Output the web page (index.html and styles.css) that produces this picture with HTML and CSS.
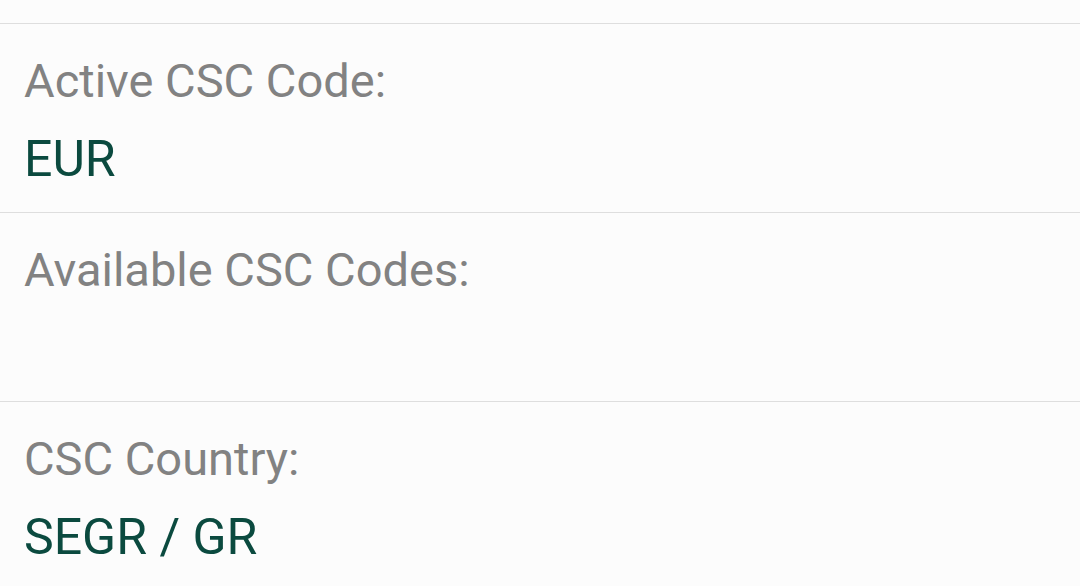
FILE: index.html
```html
<!DOCTYPE html>
<html>
  <head>
    <meta charset="utf-8">
    <title>CSC info</title>
    <link rel="stylesheet" href="styles.css">
  </head>
  <body>
    <div class="list">
      <div class="item item-prev"></div>
      <div class="item">
        <div class="label">Active CSC Code:</div>
        <div class="value">EUR</div>
      </div>
      <div class="item">
        <div class="label">Available CSC Codes:</div>
        <div class="value"></div>
      </div>
      <div class="item">
        <div class="label">CSC Country:</div>
        <div class="value">SEGR / GR</div>
      </div>
    </div>
  </body>
</html>
```

FILE: styles.css
```css
html, body {
  margin: 0;
  padding: 0;
  background-color: #fcfcfc;
}
body {
  font-family: Roboto, "Noto Sans", sans-serif;
  overflow: hidden;
}
.list {
  display: flex;
  flex-direction: column;
}
.item {
  padding: 18px 24px 14px;
  border-bottom: 1px solid #dedede;
}
.item-prev {
  height: 23px;
  padding: 0;
}
.label {
  font-size: 47px;
  line-height: 78px;
  height: 78px;
  color: #828282;
}
.value {
  font-size: 50px;
  line-height: 78px;
  height: 78px;
  color: #0b4a3f;
}
```
